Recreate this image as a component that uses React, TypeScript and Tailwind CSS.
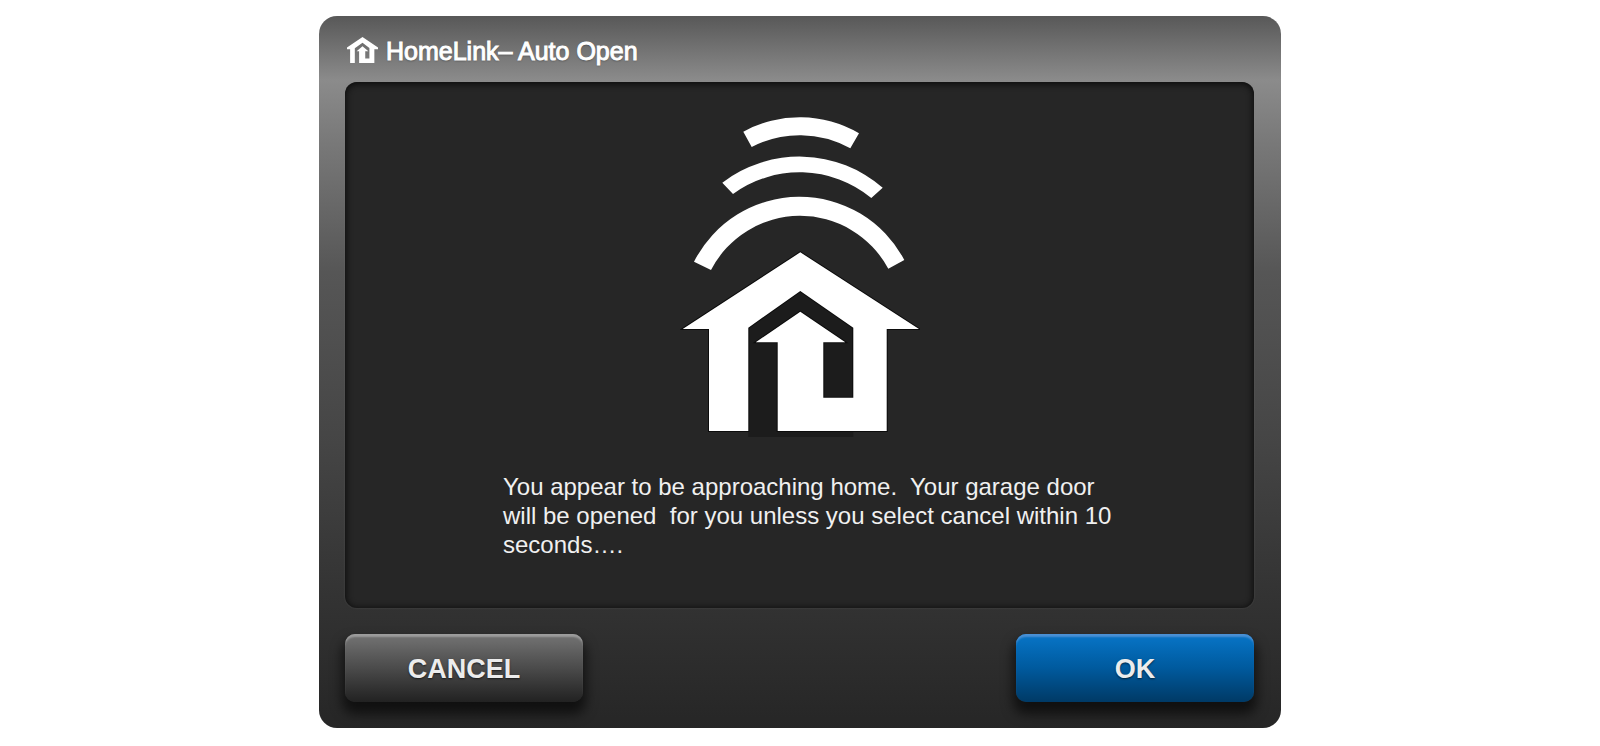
import type { ButtonHTMLAttributes } from 'react';
import clsx from 'clsx';

const HOUSE_PATH =
  'M118.3 136.3 L237 213 H204.7 V315 H95.7 V226.3 H73.7 L118.3 195.7 L163.3 226.3 H141.3 V281.7 H171.3 V211.7 L118.3 175 L66.3 211.7 V315 H27 V213 H0.7 Z';

function HomeLinkIcon({ className }: { className?: string }) {
  return (
    <svg viewBox="0 135 238 181" preserveAspectRatio="none" className={className} aria-hidden="true">
      {/* wider openings so it reads at small sizes */}
      <path
        d="M119 135 L238 208 V220 H210 V316 H93 V234 H74 L119 200 L164 234 H140 V284 H172 V212 L119 175 L60 214 V316 H24 V220 H0 V208 Z"
        fill="#fff"
      />
    </svg>
  );
}

function HomeSignal({ className }: { className?: string }) {
  return (
    <svg viewBox="-2 0 240 322" className={className} role="img" aria-label="Home signal">
      {/* doorway shade */}
      <path d="M66.3 211.7 L118.3 175 L171.3 211.7 V321 H66.3 Z" fill="#1c1c1c" />
      <g fill="#fff">
        <path d="M61.3 15.7 A117.5 117.5 0 0 1 177 17.3 L168.3 32.3 A104 104 0 0 0 69.7 31 Z" />
        <path d="M40.3 66.7 A127 127 0 0 1 200.7 71.7 L189.3 82 A113 113 0 0 0 51 78 Z" />
        <path d="M12 145.7 A118.3 118.3 0 0 1 222.3 144 L206.3 152.7 A100.2 100.2 0 0 0 29 154 Z" />
      </g>
      <path d={HOUSE_PATH} fill="#fff" stroke="#0c0c0c" strokeWidth="2" paintOrder="stroke" />
    </svg>
  );
}

type DialogButtonProps = ButtonHTMLAttributes<HTMLButtonElement> & { primary?: boolean };

function DialogButton({ primary, children, ...props }: DialogButtonProps) {
  return (
    <button
      type="button"
      className={clsx(
        'h-[68px] w-[238px] rounded-[10px] pt-0.5 text-[27px] font-bold text-[#ececec] bg-linear-to-b [text-shadow:0_1px_2px_rgba(0,0,0,0.6)]',
        primary
          ? 'from-[#0670c0] from-10% via-[#005a9e] via-50% to-[#003a66] shadow-[inset_0_4px_2px_-1px_#4a90d4,0_9px_12px_3px_rgba(0,0,0,0.6)]'
          : 'from-[#6c6c6c] from-10% via-[#4b4b4b] via-50% to-[#222222] shadow-[inset_0_4px_2px_-1px_#9c9c9c,0_9px_12px_3px_rgba(0,0,0,0.6)]',
      )}
      {...props}
    >
      {children}
    </button>
  );
}

export default function App() {
  return (
    <main className="min-h-screen bg-white py-4 font-['Liberation_Sans',Arial,sans-serif]">
      <section
        role="dialog"
        aria-labelledby="dialog-title"
        aria-describedby="dialog-message"
        className="mx-auto flex w-full max-w-[962px] flex-col rounded-[18px] bg-[linear-gradient(to_bottom,#585858_0%,#8b8b8b_9%,#7a7a7a_17%,#565656_36%,#454545_60%,#343434_80%,#262626_100%)] pr-[27px] pb-[26px] pl-[26px]"
      >
        <header className="flex h-[66px] items-center gap-2 px-0.5 pt-0.5">
          <HomeLinkIcon className="h-[26px] w-[31px] shrink-0" />
          <h1
            id="dialog-title"
            className="pt-0.5 text-[25px] leading-8 text-white [-webkit-text-stroke:1px_#fff] [text-shadow:0_1px_2px_rgba(0,0,0,0.4)]"
          >
            HomeLink– Auto Open
          </h1>
        </header>

        <div className="flex flex-col items-center gap-[34px] rounded-xl bg-[#262626] pt-[34px] pb-[49px] shadow-[inset_0_1px_6px_1px_#0c0c0c,0_0_2px_rgba(150,150,150,0.3)]">
          <HomeSignal className="h-[322px] w-[240px]" />
          <p
            id="dialog-message"
            className="w-full whitespace-pre-wrap pr-[130px] pl-[158px] text-2xl leading-[29px] text-[#f0f0f0]"
          >
            {'You appear to be approaching home.  Your garage door will be opened  for you unless you select cancel within 10 seconds….'}
          </p>
        </div>

        <footer className="flex justify-between gap-4 pt-[26px]">
          <DialogButton>CANCEL</DialogButton>
          <DialogButton primary>OK</DialogButton>
        </footer>
      </section>
    </main>
  );
}
